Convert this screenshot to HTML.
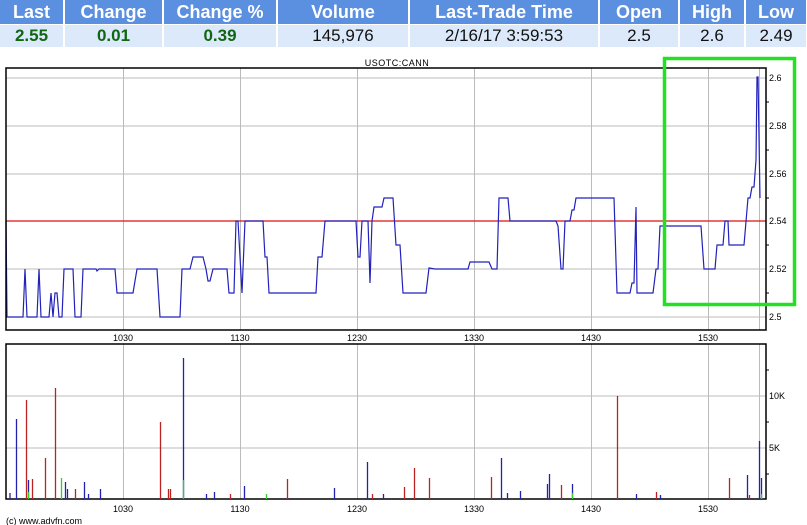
<!DOCTYPE html>
<html><head><meta charset="utf-8"><style>
body{margin:0;width:807px;height:525px;background:#fff;overflow:hidden;font-family:"Liberation Sans",Arial,sans-serif}
table{border-collapse:collapse;width:807px;position:absolute;top:0;left:0;table-layout:fixed}
th{background:#5b8fe0;color:#fff;font-weight:bold;font-size:18px;height:24px;padding:0;border-right:2px solid #fff;text-align:center}
td{background:#dce9fb;font-size:17px;height:22px;padding:0;text-align:center;border-right:2px solid #fff;border-top:1px solid #fff;color:#111}
td.g{color:#116611;font-weight:bold}
</style></head><body>
<table><colgroup><col style="width:64px"><col style="width:99px"><col style="width:114px"><col style="width:132px"><col style="width:190px"><col style="width:80px"><col style="width:66px"><col style="width:62px"></colgroup>
<tr><th>Last</th><th>Change</th><th>Change %</th><th>Volume</th><th>Last-Trade Time</th><th>Open</th><th>High</th><th>Low</th></tr>
<tr><td class="g">2.55</td><td class="g">0.01</td><td class="g">0.39</td><td>145,976</td><td>2/16/17 3:59:53</td><td>2.5</td><td>2.6</td><td>2.49</td></tr></table>
<svg width="807" height="525" style="position:absolute;top:0;left:0" font-family="Liberation Sans,Arial,sans-serif">
<text x="397" y="66" font-size="9" text-anchor="middle" letter-spacing="0.5">USOTC:CANN</text>
<g stroke="#bbb" stroke-width="1">
<line x1="6" y1="78" x2="766" y2="78"/><line x1="6" y1="126" x2="766" y2="126"/><line x1="6" y1="174" x2="766" y2="174"/><line x1="6" y1="269" x2="766" y2="269"/><line x1="6" y1="317" x2="766" y2="317"/>
<line x1="123.5" y1="68" x2="123.5" y2="330"/><line x1="240.5" y1="68" x2="240.5" y2="330"/><line x1="357.5" y1="68" x2="357.5" y2="330"/><line x1="474.5" y1="68" x2="474.5" y2="330"/><line x1="591.5" y1="68" x2="591.5" y2="330"/><line x1="708.5" y1="68" x2="708.5" y2="330"/><line x1="759.5" y1="68" x2="759.5" y2="330"/>
<line x1="6" y1="396" x2="766" y2="396"/><line x1="6" y1="448" x2="766" y2="448"/>
<line x1="123.5" y1="344" x2="123.5" y2="499"/><line x1="240.5" y1="344" x2="240.5" y2="499"/><line x1="357.5" y1="344" x2="357.5" y2="499"/><line x1="474.5" y1="344" x2="474.5" y2="499"/><line x1="591.5" y1="344" x2="591.5" y2="499"/><line x1="708.5" y1="344" x2="708.5" y2="499"/><line x1="759.5" y1="344" x2="759.5" y2="499"/>
</g>
<g stroke="#000"><line x1="766" y1="102" x2="769" y2="102"/><line x1="766" y1="150" x2="769" y2="150"/><line x1="766" y1="198" x2="769" y2="198"/><line x1="766" y1="245" x2="769" y2="245"/><line x1="766" y1="293" x2="769" y2="293"/><line x1="766" y1="370" x2="769" y2="370"/><line x1="766" y1="422" x2="769" y2="422"/><line x1="766" y1="474" x2="769" y2="474"/></g>
<line x1="6" y1="221" x2="766" y2="221" stroke="#dd1111" stroke-width="1.2"/>
<polyline fill="none" stroke="#2222bb" stroke-width="1.2" points="6,221 7,317 23,317 25,269 27,317 37,317 39,269 41,317 49,317 51,293 53,317 55,293 57,293 59,317 62,317 64,269 73,269 75,317 81,317 83,269 96,269 97,271 99,269 115,269 117,293 133,293 137,269 157,269 160,317 180,317 182,269 190,269 193,257 203,257 206,269 208,281 210,281 213,269 227,269 229,293 234,293 236,221 238,221 242,293 245,221 263,221 265,257 267,257 269,293 316,293 318,257 322,257 325,221 356,221 358,257 360,257 362,221 368,221 370,283 372,221 374,207 382,207 384,198 393,198 396,245 400,245 403,293 426,293 429,268 435,269 468,269 470,262 489,262 492,269 497,269 499,198 508,198 510,221 556,221 558,226 561,269 563,269 565,221 570,221 572,210 574,210 576,198 614,198 617,293 630,293 632,283 634,283 636,207 637,293 653,293 656,269 658,269 660,226 701,226 704,269 715,269 717,245 723,245 725,221 728,221 729,245 744,245 748,198 750,198 752,187 754,187 756,160 757,77 758,77 760,198"/>
<rect x="6" y="68" width="760" height="262" fill="none" stroke="#000" stroke-width="1.5"/>
<rect x="6" y="344" width="760" height="155" fill="none" stroke="#000" stroke-width="1.5"/>
<g font-size="9">
<text x="769" y="81">2.6</text><text x="769" y="129">2.58</text><text x="769" y="177">2.56</text><text x="769" y="224">2.54</text><text x="769" y="272">2.52</text><text x="769" y="320">2.5</text>
<text x="769" y="399">10K</text><text x="769" y="451">5K</text>
<g text-anchor="middle"><text x="123" y="341">1030</text><text x="240" y="341">1130</text><text x="357" y="341">1230</text><text x="474" y="341">1330</text><text x="591" y="341">1430</text><text x="708" y="341">1530</text>
<text x="123" y="512">1030</text><text x="240" y="512">1130</text><text x="357" y="512">1230</text><text x="474" y="512">1330</text><text x="591" y="512">1430</text><text x="708" y="512">1530</text></g>
<text x="6" y="524">(c) www.advfn.com</text>
</g>
<g stroke-width="1.3">
<g stroke="#2222aa">
<line x1="10" y1="499" x2="10" y2="493"/><line x1="16.5" y1="499" x2="16.5" y2="419"/><line x1="28.5" y1="499" x2="28.5" y2="480"/><line x1="65.5" y1="499" x2="65.5" y2="482"/><line x1="67.5" y1="499" x2="67.5" y2="489"/><line x1="84.5" y1="499" x2="84.5" y2="482"/><line x1="88.5" y1="499" x2="88.5" y2="494"/><line x1="100.5" y1="499" x2="100.5" y2="489"/><line x1="183.5" y1="499" x2="183.5" y2="358"/><line x1="206.5" y1="499" x2="206.5" y2="494"/><line x1="214.5" y1="499" x2="214.5" y2="492"/><line x1="244.5" y1="499" x2="244.5" y2="486"/><line x1="334.5" y1="499" x2="334.5" y2="488"/><line x1="367.5" y1="499" x2="367.5" y2="462"/><line x1="383.5" y1="499" x2="383.5" y2="494"/><line x1="501.5" y1="499" x2="501.5" y2="458"/><line x1="507.5" y1="499" x2="507.5" y2="493"/><line x1="520.5" y1="499" x2="520.5" y2="491"/><line x1="547.5" y1="499" x2="547.5" y2="484"/><line x1="549.5" y1="499" x2="549.5" y2="474"/><line x1="572.5" y1="499" x2="572.5" y2="484"/><line x1="636.5" y1="499" x2="636.5" y2="494"/><line x1="660.5" y1="499" x2="660.5" y2="495"/><line x1="747.5" y1="499" x2="747.5" y2="475"/><line x1="759.5" y1="499" x2="759.5" y2="441"/><line x1="761.5" y1="499" x2="761.5" y2="478"/>
</g>
<g stroke="#bb2222">
<line x1="26.5" y1="499" x2="26.5" y2="400"/><line x1="32.5" y1="499" x2="32.5" y2="479"/><line x1="45.5" y1="499" x2="45.5" y2="458"/><line x1="55.5" y1="499" x2="55.5" y2="388"/><line x1="75.5" y1="499" x2="75.5" y2="489"/><line x1="160.5" y1="499" x2="160.5" y2="422"/><line x1="168.5" y1="499" x2="168.5" y2="489"/><line x1="170.5" y1="499" x2="170.5" y2="489"/><line x1="230.5" y1="499" x2="230.5" y2="494"/><line x1="287.5" y1="499" x2="287.5" y2="479"/><line x1="372.5" y1="499" x2="372.5" y2="494"/><line x1="404.5" y1="499" x2="404.5" y2="487"/><line x1="414.5" y1="499" x2="414.5" y2="468"/><line x1="429.5" y1="499" x2="429.5" y2="478"/><line x1="491.5" y1="499" x2="491.5" y2="477"/><line x1="561.5" y1="499" x2="561.5" y2="485"/><line x1="617.5" y1="499" x2="617.5" y2="396"/><line x1="656.5" y1="499" x2="656.5" y2="492"/><line x1="729.5" y1="499" x2="729.5" y2="478"/><line x1="749.5" y1="499" x2="749.5" y2="495"/>
</g>
<g stroke="#33cc33">
<line x1="28.5" y1="499" x2="28.5" y2="492"/><line x1="61.5" y1="499" x2="61.5" y2="478"/><line x1="183.5" y1="499" x2="183.5" y2="480"/><line x1="266.5" y1="499" x2="266.5" y2="494"/><line x1="572.5" y1="499" x2="572.5" y2="493"/><line x1="761.5" y1="499" x2="761.5" y2="494"/>
</g>
</g>
<rect x="664.5" y="58.5" width="130" height="246" fill="none" stroke="#22e022" stroke-width="3.5"/>
</svg>
</body></html>
